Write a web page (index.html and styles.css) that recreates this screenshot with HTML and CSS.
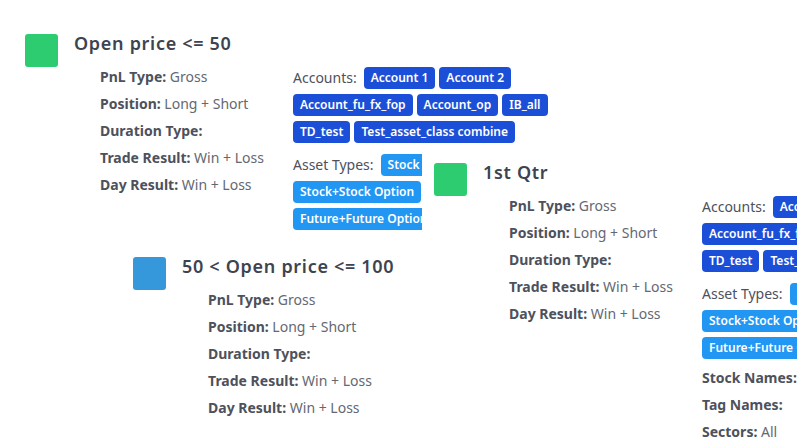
FILE: index.html
```html
<!DOCTYPE html>
<html lang="en">
<head>
  <meta charset="UTF-8">
  <meta name="viewport" content="width=device-width, initial-scale=1">
  <title>Report legends</title>
  <link rel="stylesheet" href="styles.css">
</head>
<body>
  <div class="canvas">

    <!-- legend: Open price <= 50 -->
    <div class="legend legend-a">
      <span class="swatch swatch-green"></span>
      <div class="legend-body">
        <h2 class="legend-title">Open price &lt;= 50</h2>
        <div class="legend-cols">
          <ul class="props">
            <li><b>PnL Type:</b> Gross</li>
            <li><b>Position:</b> Long + Short</li>
            <li><b>Duration Type:</b></li>
            <li><b>Trade Result:</b> Win + Loss</li>
            <li><b>Day Result:</b> Win + Loss</li>
          </ul>
          <div class="filters">
            <div class="filter-group">
              <span class="filter-label">Accounts:</span>
              <span class="tag">Account 1</span>
              <span class="tag">Account 2</span>
              <span class="tag">Account_fu_fx_fop</span>
              <span class="tag">Account_op</span>
              <span class="tag">IB_all</span>
              <span class="tag">TD_test</span>
              <span class="tag">Test_asset_class combine</span>
            </div>
            <div class="filter-group">
              <span class="filter-label">Asset Types:</span>
              <span class="tag tag-light">Stock</span>
              <span class="tag tag-light">Stock+Stock Option</span>
              <span class="tag tag-light">Future+Future Option</span>
            </div>
          </div>
        </div>
      </div>
    </div>

    <!-- legend: 50 < Open price <= 100 -->
    <div class="legend legend-b">
      <span class="swatch swatch-blue"></span>
      <div class="legend-body">
        <h2 class="legend-title">50 &lt; Open price &lt;= 100</h2>
        <div class="legend-cols">
          <ul class="props">
            <li><b>PnL Type:</b> Gross</li>
            <li><b>Position:</b> Long + Short</li>
            <li><b>Duration Type:</b></li>
            <li><b>Trade Result:</b> Win + Loss</li>
            <li><b>Day Result:</b> Win + Loss</li>
          </ul>
        </div>
      </div>
    </div>

    <!-- legend: 1st Qtr -->
    <div class="legend legend-c">
      <span class="swatch swatch-green"></span>
      <div class="legend-body">
        <h2 class="legend-title">1st Qtr</h2>
        <div class="legend-cols">
          <ul class="props">
            <li><b>PnL Type:</b> Gross</li>
            <li><b>Position:</b> Long + Short</li>
            <li><b>Duration Type:</b></li>
            <li><b>Trade Result:</b> Win + Loss</li>
            <li><b>Day Result:</b> Win + Loss</li>
          </ul>
          <div class="filters">
            <div class="filter-group">
              <span class="filter-label">Accounts:</span>
              <span class="tag">Account 1</span>
              <span class="tag">Account 2</span>
              <span class="tag">Account_fu_fx_fop</span>
              <span class="tag">Account_op</span>
              <span class="tag">IB_all</span>
              <span class="tag">TD_test</span>
              <span class="tag">Test_asset_class combine</span>
            </div>
            <div class="filter-group">
              <span class="filter-label">Asset Types:</span>
              <span class="tag tag-light">Stock</span>
              <span class="tag tag-light">Stock+Stock Option</span>
              <span class="tag tag-light">Future+Future Option</span>
            </div>
            <div class="filter-line"><b>Stock Names:</b></div>
            <div class="filter-line"><b>Tag Names:</b></div>
            <div class="filter-line"><b>Sectors:</b> All</div>
          </div>
        </div>
      </div>
    </div>

  </div>
</body>
</html>
```

FILE: styles.css
```css
body {
  margin: 0;
  padding: 0;
  background-color: #ffffff;
  font-family: "Noto Sans", Arial, sans-serif;
  color: #646873;
  overflow: hidden;
}
.canvas {
  position: relative;
  width: 797px;
  height: 441px;
  overflow: hidden;
}
.legend {
  position: absolute;
  display: flex;
  align-items: flex-start;
  gap: 16px;
  padding: 12px;
  background-color: white;
}
.legend-a {
  left: 13px;
  top: 22px;
}
.legend-b {
  left: 121px;
  top: 245px;
}
.legend-c {
  left: 422px;
  top: 151px;
}
.swatch {
  flex: none;
  width: 33px;
  height: 33px;
  border-radius: 3px;
}
.swatch-green {
  background-color: #2ecc71;
}
.swatch-blue {
  background-color: #3498db;
}
.legend-title {
  margin: -1px 0 0;
  font-size: 18px;
  line-height: 20px;
  font-weight: 600;
  letter-spacing: 0.7px;
  color: #3e4350;
}
.legend-cols {
  display: flex;
  align-items: flex-start;
  margin-top: 10px;
  margin-left: 26px;
}
.props {
  list-style: none;
  margin: 0;
  padding: 0;
  width: 193px;
  flex: none;
  font-size: 14px;
  line-height: 27px;
}
.props b,
.filters b {
  font-weight: 700;
  color: #4d515c;
}
.filters {
  width: 262px;
  flex: none;
  padding-top: 4px;
  font-size: 14px;
}
.filter-group {
  display: flex;
  flex-wrap: wrap;
  align-items: center;
  gap: 5px 4px;
}
.filter-group + .filter-group {
  margin-top: 11px;
}
.filter-label {
  font-weight: 400;
  color: #4d515c;
  margin-right: 3px;
  line-height: 22px;
}
.tag {
  display: inline-block;
  padding: 0 7px;
  height: 22px;
  line-height: 22px;
  border-radius: 4px;
  background-color: #1c4fd8;
  color: white;
  font-size: 12px;
  font-weight: 600;
  white-space: nowrap;
}
.tag-light {
  background-color: #2196f3;
}
.filter-line {
  line-height: 27px;
}
.filter-group + .filter-line {
  margin-top: 5px;
}
```
